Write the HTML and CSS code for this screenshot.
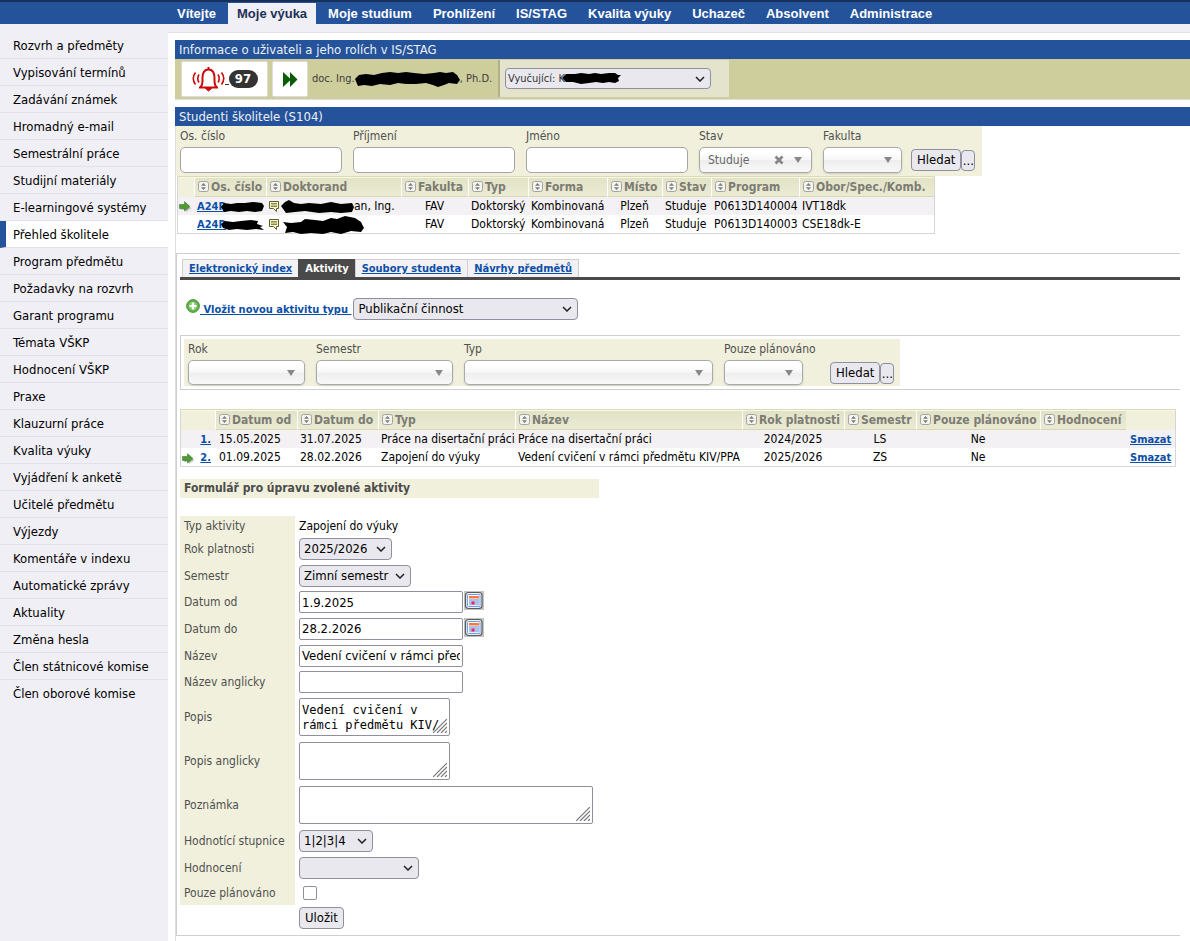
FILE: index.html
```html
<!DOCTYPE html>
<html lang="cs">
<head>
<meta charset="utf-8">
<title>Moje výuka – IS/STAG</title>
<link rel="stylesheet" href="styles.css">
</head>
<body>
<svg class="symbols" aria-hidden="true">
  <symbol id="sort" viewBox="0 0 11 11"><rect x=".5" y=".5" width="10" height="10" rx="2" fill="#f4f4ee" stroke="#a3a3a3"/><path d="M5.500 2 8 4.700H3zM5.500 9 8 6.300H3z" fill="#7d7d7d"/></symbol>
  <symbol id="arrow" viewBox="0 0 13 11"><path d="M2 5.500h5V3l5.500 4.300L7 11V9H2z" fill="#c4c4c4"/><path d="M.5 3.500h5V.7L11 5.500 5.500 10V7.500h-5z" fill="#4f9a35" stroke="#3b7a28" stroke-width=".6"/></symbol>
  <symbol id="note" viewBox="0 0 10 11"><path d="M.5 .5h9v7H7.500v3L4.500 7.500h-4z" fill="#fbfbb4" stroke="#5c5c3c"/><path d="M2 2.500h6M2 4h6M2 5.500h6" stroke="#6c6c4c" stroke-width=".8"/></symbol>
  <symbol id="cal" viewBox="0 0 20 19"><path d="M0 0h20v19H0z" fill="#c3c3c3"/><rect x="1.500" y="1.500" width="16.500" height="16" rx="3" fill="#e9eef8" stroke="#5c5c5c" stroke-width="1.200"/><rect x="3.500" y="3.500" width="12.500" height="12" rx="1" fill="#fff" stroke="#6f9fe0"/><path d="M5 5h10v2.500H5z" fill="#f77a45"/><path d="M5 9h10M5 11h10M5 13h10M6 8v6.500M8 8v6.500M10 8v6.500M12 8v6.500M14 8v6.500" stroke="#6f97df" stroke-width=".7"/><path d="M7.500 10.500h3v3h-3z" fill="#e82478"/></symbol>
</svg>

<header class="topbar">
  <nav class="tabs-main">
    <a href="#">Vítejte</a>
    <a href="#" class="current">Moje výuka</a>
    <a href="#">Moje studium</a>
    <a href="#">Prohlížení</a>
    <a href="#">IS/STAG</a>
    <a href="#">Kvalita výuky</a>
    <a href="#">Uchazeč</a>
    <a href="#">Absolvent</a>
    <a href="#">Administrace</a>
  </nav>
</header>

<div class="layout">
  <nav class="sidebar">
    <a href="#">Rozvrh a předměty</a>
    <a href="#">Vypisování termínů</a>
    <a href="#">Zadávání známek</a>
    <a href="#">Hromadný e-mail</a>
    <a href="#">Semestrální práce</a>
    <a href="#">Studijní materiály</a>
    <a href="#">E-learningové systémy</a>
    <a href="#" class="current">Přehled školitele</a>
    <a href="#">Program předmětu</a>
    <a href="#">Požadavky na rozvrh</a>
    <a href="#">Garant programu</a>
    <a href="#">Témata VŠKP</a>
    <a href="#">Hodnocení VŠKP</a>
    <a href="#">Praxe</a>
    <a href="#">Klauzurní práce</a>
    <a href="#">Kvalita výuky</a>
    <a href="#">Vyjádření k anketě</a>
    <a href="#">Učitelé předmětu</a>
    <a href="#">Výjezdy</a>
    <a href="#">Komentáře v indexu</a>
    <a href="#">Automatické zprávy</a>
    <a href="#">Aktuality</a>
    <a href="#">Změna hesla</a>
    <a href="#">Člen státnicové komise</a>
    <a href="#">Člen oborové komise</a>
  </nav>

  <main class="content">
    <section class="user-panel">
      <h2 class="panel-title">Informace o uživateli a jeho rolích v IS/STAG</h2>
      <div class="user-bar">
        <a href="#" class="tile tile-bell" aria-label="Upozornění: 97">
          <svg width="33" height="26" viewBox="0 0 33 26" fill="none" stroke="#cc0a0a" stroke-width="2"><path d="M7 21.500h19M8.500 21c2.500-2.500 2-5 2-9 0-5 2-8.500 6-8.500s6 3.500 6 8.500c0 4-.5 6.500 2 9M16.500 4V1"/><path d="M13.500 22.500h6L16.500 25z" fill="#cc0a0a" stroke-width="1"/><path d="M7 8.500q-2.500 4 0 8M3.500 6.500q-4.500 6 0 12M26 8.500q2.500 4 0 8M29.500 6.500q4.500 6 0 12" stroke-width="1.600"/></svg>
          <span class="link-gap"></span>
          <span class="count">97</span>
        </a>
        <a href="#" class="tile tile-next" aria-label="Další">
          <svg width="16" height="17" viewBox="0 0 16 17" fill="#085c08"><path d="M1 1 8 7.500V1l7.500 7.500L8 16V9.500L1 16z"/></svg>
        </a>
        <p class="user-name">doc. Ing.
          <svg class="scribble" width="106" height="18" viewBox="0 0 106 18"><path d="M1 9 5 5 12 4 20 5 28 3 36 2 44 3 52 2 60 3 70 4 80 3 86 2 92 3 99 2 103 5 106 10 103 14 95 13 90 15 84 17 79 15 72 13 62 14 52 14 44 13 36 15 26 14 18 16 10 15 4 16z"/></svg>, Ph.D.</p>
        <div class="role">
          <span class="pick pick-role">
            <select class="native" aria-label="Role"><option>Vyučující: K</option></select>
            <svg class="scribble over" width="60" height="14" viewBox="0 0 60 14"><path d="M1 7 5 3 14 3 20 2 28 3 34 2 40 3 48 2 54 2 57 4 60 4 57 7 58 10 54 12 48 11 42 12 35 11 28 12 20 13 12 11 5 11z"/></svg>
          </span>
        </div>
      </div>
    </section>

    <section class="students">
      <h2 class="panel-title">Studenti školitele (S104)</h2>
      <div class="students-body">
        <form class="search">
          <div class="field"><label for="osc">Os. číslo</label><input id="osc" type="text"></div>
          <div class="field"><label for="prijmeni">Příjmení</label><input id="prijmeni" type="text"></div>
          <div class="field"><label for="jmeno">Jméno</label><input id="jmeno" type="text"></div>
          <div class="field"><label for="stav">Stav</label>
            <span class="pick"><select id="stav" class="soft w-stav"><option>Studuje</option></select>
            <button type="button" class="clear" aria-label="Vymazat"><svg width="10" height="10" viewBox="0 0 10 10"><path d="M1.500 1.500l7 7m0-7-7 7" stroke="#858585" stroke-width="2.600"/></svg></button></span></div>
          <div class="field"><label for="fakulta">Fakulta</label><select id="fakulta" class="soft w-fak"><option></option></select></div>
          <div class="actions"><button type="button" class="btn">Hledat</button><button type="button" class="btn more">...</button></div>
        </form>

        <table class="grid grid-students">
          <colgroup><col class="c16"><col class="c72"><col class="c135"><col class="c67"><col class="c60"><col class="c79"><col class="c55"><col class="c49"><col class="c88"><col class="c135"></colgroup>
          <thead><tr>
            <th class="blank"></th>
            <th><svg><use href="#sort"/></svg>Os. číslo</th>
            <th><svg><use href="#sort"/></svg>Doktorand</th>
            <th><svg><use href="#sort"/></svg>Fakulta</th>
            <th><svg><use href="#sort"/></svg>Typ</th>
            <th><svg><use href="#sort"/></svg>Forma</th>
            <th><svg><use href="#sort"/></svg>Místo</th>
            <th><svg><use href="#sort"/></svg>Stav</th>
            <th><svg><use href="#sort"/></svg>Program</th>
            <th><svg><use href="#sort"/></svg>Obor/Spec./Komb.</th>
          </tr></thead>
          <tbody>
            <tr>
              <td class="mark"><svg class="go"><use href="#arrow"/></svg></td>
              <td><a href="#">A24R<svg class="scribble" width="43" height="12" viewBox="0 0 43 12"><path d="M0 6 3 2 10 3 16 2 24 2 32 1 41 2 43 5 41 10 34 11 26 10 18 11 10 10 3 11z"/></svg></a></td>
              <td><svg class="note"><use href="#note"/></svg><svg class="scribble" width="73" height="14" viewBox="0 0 73 14"><path d="M0 6 4 2 8 0 13 3 20 4 28 3 40 4 50 2 60 4 71 3 73 7 71 12 60 13 50 12 38 13 24 11 14 12 5 13z"/></svg>an, Ing.</td>
              <td class="mid">FAV</td><td>Doktorský</td><td>Kombinovaná</td><td class="mid">Plzeň</td><td>Studuje</td><td>P0613D140004</td><td>IVT18dk</td>
            </tr>
            <tr>
              <td class="mark"></td>
              <td><a href="#">A24R<svg class="scribble" width="43" height="12" viewBox="0 0 43 12"><path d="M0 5 4 2 12 3 20 2 30 1 37 2 36 5 42 7 39 8 43 11 35 10 26 11 16 10 8 11 2 9z"/></svg></a></td>
              <td><svg class="note"><use href="#note"/></svg><svg class="scribble" width="84" height="18" viewBox="0 0 84 18"><path d="M2 6 10 7 20 6 24 3 34 4 42 5 50 2 56 3 64 0 74 2 80 6 83 12 80 16 70 15 60 18 50 16 42 18 30 17 20 18 12 16 4 17 6 11z"/></svg></td>
              <td class="mid">FAV</td><td>Doktorský</td><td>Kombinovaná</td><td class="mid">Plzeň</td><td>Studuje</td><td>P0613D140003</td><td>CSE18dk-E</td>
            </tr>
          </tbody>
        </table>

        <div class="detail">
          <nav class="tabs">
            <a href="#">Elektronický index</a>
            <a href="#" class="current">Aktivity</a>
            <a href="#">Soubory studenta</a>
            <a href="#">Návrhy předmětů</a>
          </nav>

          <div class="insert">
            <svg class="plus" width="14" height="14" viewBox="0 0 14 14"><circle cx="7" cy="7" r="6.400" fill="#62b14c" stroke="#4c963a"/><circle cx="7" cy="7" r="4" fill="#8fd07c"/><path d="M7 3.500v7M3.500 7h7" stroke="#fff" stroke-width="2.200"/></svg>
            <a href="#">&nbsp;Vložit novou aktivitu typu&nbsp;</a>
            <select class="native w-typ" aria-label="Typ nové aktivity"><option>Publikační činnost</option></select>
          </div>

          <div class="filter-frame">
            <form class="filter">
              <div class="field"><label for="rok">Rok</label><select id="rok" class="soft w-rok"><option></option></select></div>
              <div class="field"><label for="sem">Semestr</label><select id="sem" class="soft w-sem"><option></option></select></div>
              <div class="field"><label for="typ">Typ</label><select id="typ" class="soft w-long"><option></option></select></div>
              <div class="field planned"><label for="pl">Pouze plánováno</label><select id="pl" class="soft w-fak"><option></option></select></div>
              <div class="actions"><button type="button" class="btn">Hledat</button><button type="button" class="btn more">...</button></div>
            </form>
          </div>

          <table class="grid grid-act">
            <colgroup><col class="c34"><col class="c82"><col class="c81"><col class="c137"><col class="c227"><col class="c102"><col class="c72"><col class="c124"><col class="c86"><col class="c49"></colgroup>
            <thead><tr>
              <th class="blank"></th>
              <th><svg><use href="#sort"/></svg>Datum od</th>
              <th><svg><use href="#sort"/></svg>Datum do</th>
              <th><svg><use href="#sort"/></svg>Typ</th>
              <th><svg><use href="#sort"/></svg>Název</th>
              <th><svg><use href="#sort"/></svg>Rok platnosti</th>
              <th><svg><use href="#sort"/></svg>Semestr</th>
              <th><svg><use href="#sort"/></svg>Pouze plánováno</th>
              <th><svg><use href="#sort"/></svg>Hodnocení</th>
              <th class="blank"></th>
            </tr></thead>
            <tbody>
              <tr><td class="num"><a href="#">1.</a></td><td>15.05.2025</td><td>31.07.2025</td><td>Práce na disertační práci</td><td>Práce na disertační práci</td><td class="mid">2024/2025</td><td class="mid">LS</td><td class="mid">Ne</td><td></td><td><a href="#">Smazat</a></td></tr>
              <tr><td class="num"><svg class="go"><use href="#arrow"/></svg><a href="#">2.</a></td><td>01.09.2025</td><td>28.02.2026</td><td>Zapojení do výuky</td><td>Vedení cvičení v rámci předmětu KIV/PPA</td><td class="mid">2025/2026</td><td class="mid">ZS</td><td class="mid">Ne</td><td></td><td><a href="#">Smazat</a></td></tr>
            </tbody>
          </table>

          <h3 class="form-title">Formulář pro úpravu zvolené aktivity</h3>

          <form class="edit">
            <div class="row first"><span class="lab">Typ aktivity</span><div class="val">Zapojení do výuky</div></div>
            <div class="row"><label class="lab" for="f1">Rok platnosti</label><div class="val"><select id="f1" class="native w-1"><option>2025/2026</option></select></div></div>
            <div class="row"><label class="lab" for="f2">Semestr</label><div class="val"><select id="f2" class="native w-2"><option>Zimní semestr</option></select></div></div>
            <div class="row short"><label class="lab" for="f3">Datum od</label><div class="val"><input id="f3" type="text" value="1.9.2025"><button type="button" class="calendar" aria-label="Kalendář"><svg><use href="#cal"/></svg></button></div></div>
            <div class="row"><label class="lab" for="f4">Datum do</label><div class="val"><input id="f4" type="text" value="28.2.2026"><button type="button" class="calendar" aria-label="Kalendář"><svg><use href="#cal"/></svg></button></div></div>
            <div class="row"><label class="lab" for="f5">Název</label><div class="val"><input id="f5" type="text" value="Vedení cvičení v rámci předmětu KIV/PPA"></div></div>
            <div class="row short"><label class="lab" for="f6">Název anglicky</label><div class="val"><input id="f6" type="text"></div></div>
            <div class="row tall"><label class="lab" for="f7">Popis</label><div class="val"><textarea id="f7">Vedení cvičení v
rámci předmětu KIV/
PPA</textarea></div></div>
            <div class="row tall"><label class="lab" for="f8">Popis anglicky</label><div class="val"><textarea id="f8"></textarea></div></div>
            <div class="row tall"><label class="lab" for="f9">Poznámka</label><div class="val"><textarea id="f9" class="wide"></textarea></div></div>
            <div class="row"><label class="lab" for="f10">Hodnotící stupnice</label><div class="val"><select id="f10" class="native w-3"><option>1|2|3|4</option></select></div></div>
            <div class="row"><label class="lab" for="f11">Hodnocení</label><div class="val"><select id="f11" class="native w-4"><option></option></select></div></div>
            <div class="row last"><label class="lab" for="f12">Pouze plánováno</label><div class="val"><input id="f12" type="checkbox"></div></div>
            <div class="row submit"><div class="val"><button type="button" class="btn">Uložit</button></div></div>
          </form>
        </div>
      </div>
    </section>
  </main>
</div>
</body>
</html>
```

FILE: styles.css
```css
:root {
  --blue: #24539b;
  --link: #0b4fa8;
  --cream: #f0f0dc;
  --pale: #f0eff5;
  --control: #e9e8ee;
  --edge: #8f8f9d;
}
* { box-sizing: border-box; }
body {
  margin: 0;
  min-height: 100vh;
  display: flex;
  flex-direction: column;
  background: #fff;
  color: #000;
  font: 12px/18px "DejaVu Sans Condensed", "DejaVu Sans", sans-serif;
}
h2, h3, p { margin: 0; }
input, select, textarea, button { font: inherit; color: inherit; margin: 0; }
.symbols { position: absolute; width: 0; height: 0; }

.topbar {
  background: var(--blue);
  border-top: 2px solid #16305a;
  padding-left: 168px;
}
.tabs-main { display: flex; gap: 3px; }
.tabs-main a {
  padding: 3px 9px 2px;
  margin-top: 1px;
  font: bold 13px/16px "Liberation Sans", Arial, sans-serif;
  color: #fff;
  text-decoration: none;
  white-space: nowrap;
}
.tabs-main .current { background: var(--pale); color: #1d3156; }

.layout { flex: 1; display: grid; grid-template-columns: 168px minmax(0, 1fr); }
.sidebar { background: var(--pale); padding-top: 8px; }
.sidebar a {
  display: block;
  padding: 5px 0 3px 13px;
  border-bottom: 1px solid #e2e2e6;
  font-size: 13px;
  line-height: 18px;
  color: #000;
  text-decoration: none;
}
.sidebar .current { background: #fff; border-left: 6px solid var(--blue); padding-left: 7px; }
.sidebar a:last-child { border-bottom-color: transparent; }

.content { display: flex; flex-direction: column; }
.content::before { content: ""; height: 8px; background: var(--pale); border-bottom: 1px solid #e2e2e6; }
.user-panel { margin: 7px 0 7px 7px; border-bottom: 1px solid #dedede; }
.panel-title {
  padding: 1px 4px 0;
  background: var(--blue);
  color: #edf0f5;
  font-size: 13px;
  font-weight: normal;
  line-height: 18px;
}
.user-bar {
  display: flex;
  align-items: center;
  height: 40px;
  padding-left: 6px;
  background: #cecd9c;
  color: #3c3c3c;
  font-size: 11px;
}
.tile {
  display: flex;
  align-items: center;
  justify-content: center;
  height: 36px;
  background: #fff;
  border: 1px solid #dcdcdc;
  border-radius: 2px;
  text-decoration: none;
}
.tile-bell { width: 87px; margin-right: 4px; }
.tile-next { width: 36px; margin-right: 4px; }
.link-gap { width: 4px; height: 12px; border-bottom: 1px solid #333; }
.count {
  width: 29px;
  border-radius: 9px;
  background: #333;
  color: #fff;
  font-size: 13px;
  font-weight: bold;
  text-align: center;
}
.scribble { vertical-align: middle; fill: #000; }
.user-name { white-space: nowrap; width: 186px; }
.user-name .scribble { margin-left: -4px; }
.role {
  display: flex;
  align-items: center;
  align-self: stretch;
  margin: 1px 0 2px;
  padding: 0 18px 0 5px;
  background: #e4e4cc;
  border-left: 2px solid #b2b08a;
}
.pick { position: relative; display: inline-flex; }
.pick-role select { width: 206px; height: 21px; font-size: 11px; padding-left: 2px; color: #333; }
.over { position: absolute; left: 56px; top: 3px; pointer-events: none; }

.students { flex: 1; display: flex; flex-direction: column; margin-left: 7px; }
.students-body { flex: 1; border-left: 1px solid #dedede; }
.search, .filter { display: flex; background: var(--cream); }
.search { width: 806px; height: 50px; padding-left: 4px; gap: 11px; }
.filter { width: 716px; height: 47px; padding-left: 4px; gap: 11px; }
.field { display: flex; flex-direction: column; color: #505050; }
.field label { line-height: 20px; height: 21px; }
.field input {
  width: 162px;
  height: 26px;
  border: 1px solid #a5a5a5;
  border-radius: 5px;
  background: #fff;
}
select { appearance: none; white-space: nowrap; }
.soft {
  height: 26px;
  padding: 0 8px;
  border: 1px solid #a9a9a9;
  border-radius: 5px;
  color: #666;
  background:
    url("data:image/svg+xml,%3Csvg xmlns='http://www.w3.org/2000/svg' width='8' height='6'%3E%3Cpath d='M0 0h8L4 6z' fill='%23888'/%3E%3C/svg%3E") right 9px center no-repeat,
    linear-gradient(#fff 20%, #f6f6f6 50%, #eee 52%, #f8f8f8 100%);
  box-shadow: 0 1px 2px rgba(0, 0, 0, .15);
}
.filter .soft { height: 25px; }
.w-stav { width: 113px; }
.w-fak { width: 79px; }
.w-rok { width: 117px; }
.w-sem { width: 137px; }
.w-long { width: 249px; }
.clear {
  position: absolute;
  right: 28px;
  top: 8px;
  display: flex;
  padding: 0;
  border: 0;
  background: none;
}
.native {
  height: 22px;
  padding: 0 20px 0 4px;
  border: 1px solid var(--edge);
  border-radius: 4px;
  font-size: 13px;
  background: url("data:image/svg+xml,%3Csvg xmlns='http://www.w3.org/2000/svg' width='10' height='6'%3E%3Cpath d='M1 1l4 4 4-4' fill='none' stroke='%23222' stroke-width='1.500'/%3E%3C/svg%3E") right 5px center no-repeat var(--control);
}
.w-typ { width: 225px; }
.w-1 { width: 93px; }
.w-2 { width: 112px; }
.w-3 { width: 74px; }
.w-4 { width: 120px; }
.btn {
  height: 22px;
  padding: 0 5px;
  border: 1px solid var(--edge);
  border-radius: 4px;
  background: var(--control);
  font-size: 13px;
  line-height: 18px;
}
.more { height: 21px; width: 14px; padding: 0; }
.actions { display: flex; align-items: flex-end; height: 45px; margin-left: -2px; }
.planned { width: 97px; }

.grid { table-layout: fixed; border-collapse: separate; border-spacing: 0; border: 1px solid #d6d6d6; border-top-color: #dcdcb4; white-space: nowrap; }
.grid-students { width: 758px; margin: 0 0 0 1px; }
.grid-act { width: 996px; margin-top: 19px; }
.c16 { width: 16px; } .c34 { width: 34px; } .c49 { width: 49px; } .c55 { width: 55px; }
.c60 { width: 60px; } .c67 { width: 67px; } .c72 { width: 72px; } .c79 { width: 79px; }
.c81 { width: 81px; } .c82 { width: 82px; } .c86 { width: 86px; } .c88 { width: 88px; }
.c102 { width: 102px; } .c124 { width: 124px; } .c135 { width: 135px; } .c137 { width: 137px; }
.c227 { width: 227px; }
.grid th {
  height: 20px;
  padding: 0 0 0 3px;
  text-align: left;
  color: #7c7c74;
  background: linear-gradient(#e2e2c6, #ebebd4);
  border-left: 1px solid #fff;
  border-top: 1px solid #f8f8ea;
  border-bottom: 1px solid #d8d8ac;
  line-height: 17px;
}
.grid .blank { background: var(--cream); border-left: 0; border-bottom-color: var(--cream); }
.grid th svg { width: 11px; height: 11px; margin-right: 2px; vertical-align: -1px; }
.grid td { height: 18px; padding: 0 0 0 3px; line-height: 16px; }
.grid tbody tr:first-child td { background: #f3f1f3; }
.grid a, .tabs a, .insert a { font-size: 11px; font-weight: bold; color: var(--link); }
.grid .mid { text-align: center; padding: 0; }
.grid .mark { padding: 0 0 0 1px; }
.go { width: 13px; height: 11px; vertical-align: -2px; }
.note { width: 10px; height: 11px; vertical-align: -2px; margin-right: 2px; }
.grid td .scribble { margin: -3px 0; }
.grid td a .scribble { margin-left: -5px; }
.grid .num { text-align: right; padding: 0 4px 0 1px; }
.grid-act td:nth-child(2) { padding-left: 4px; }
.grid-act td:last-child { padding-left: 4px; }
.num .go { float: left; margin-top: 4px; }

.detail {
  margin: 19px 10px 4px 0;
  border: 1px solid #cfcfcf;
  border-right: 0;
  padding: 5px 0 5px 3px;
}
.tabs { display: flex; padding-left: 2px; border-bottom: 3px solid #4a4a4a; }
.tabs a {
  padding: 0 6px;
  background: #f3f1f3;
  border: 1px solid #cfcfcf;
  border-width: 1px 0 0 1px;
  line-height: 17px;
}
.tabs a:last-child { border-right-width: 1px; }
.tabs .current { background: #4a4a4a; border-color: #4a4a4a; color: #fff; text-decoration: none; }
.insert { display: flex; align-items: center; padding: 18px 0 15px 6px; }
.insert a { margin-right: 2px; padding-top: 2px; }
.plus { margin-bottom: 6px; }
.filter-frame { border: 1px solid #cfcfcf; border-right: 0; padding: 3px; }

.form-title {
  width: 419px;
  margin: 12px 0 18px;
  padding: 0 4px 1px;
  background: var(--cream);
  color: #4c4c4c;
  font-size: 12px;
}
.row { display: grid; grid-template-columns: 115px 1fr; height: 27px; }
.lab { display: flex; align-items: center; padding-left: 4px; background: var(--cream); color: #505050; white-space: nowrap; }
.val { display: flex; align-items: center; padding-left: 4px; }
.first { height: 19px; }
.short { height: 26px; }
.tall { height: 44px; }
.last { height: 24px; }
.submit { height: 25px; }
.submit .val { grid-column: 2; }
.val input[type="text"] {
  width: 164px;
  height: 22px;
  padding: 0 2px;
  border: 1px solid var(--edge);
  border-radius: 2px;
  background: #fff;
  font-size: 13px;
}
.val input[type="checkbox"] {
  appearance: none;
  width: 14px;
  height: 14px;
  margin-left: 4px;
  border: 1px solid var(--edge);
  border-radius: 2px;
  background: #fff;
}
.calendar { display: flex; margin-left: 1px; padding: 0 0 3px; border: 0; background: none; }
.calendar svg { width: 20px; height: 19px; }
textarea {
  width: 151px;
  height: 38px;
  border: 1px solid var(--edge);
  border-radius: 2px;
  resize: none;
  overflow: hidden;
  white-space: pre-wrap;
  background: url("data:image/svg+xml,%3Csvg xmlns='http://www.w3.org/2000/svg' width='14' height='14'%3E%3Cpath d='M0 14 14 0M4 14 14 4M8 14l6-6M12 14l2-2' stroke='%23777' stroke-width='1.200'/%3E%3C/svg%3E") right 2px bottom 2px no-repeat #fff;
}
.val textarea { padding: 4px 2px 0; font: 12px/15px "DejaVu Sans Mono", monospace; }
.wide { width: 294px; }
```
